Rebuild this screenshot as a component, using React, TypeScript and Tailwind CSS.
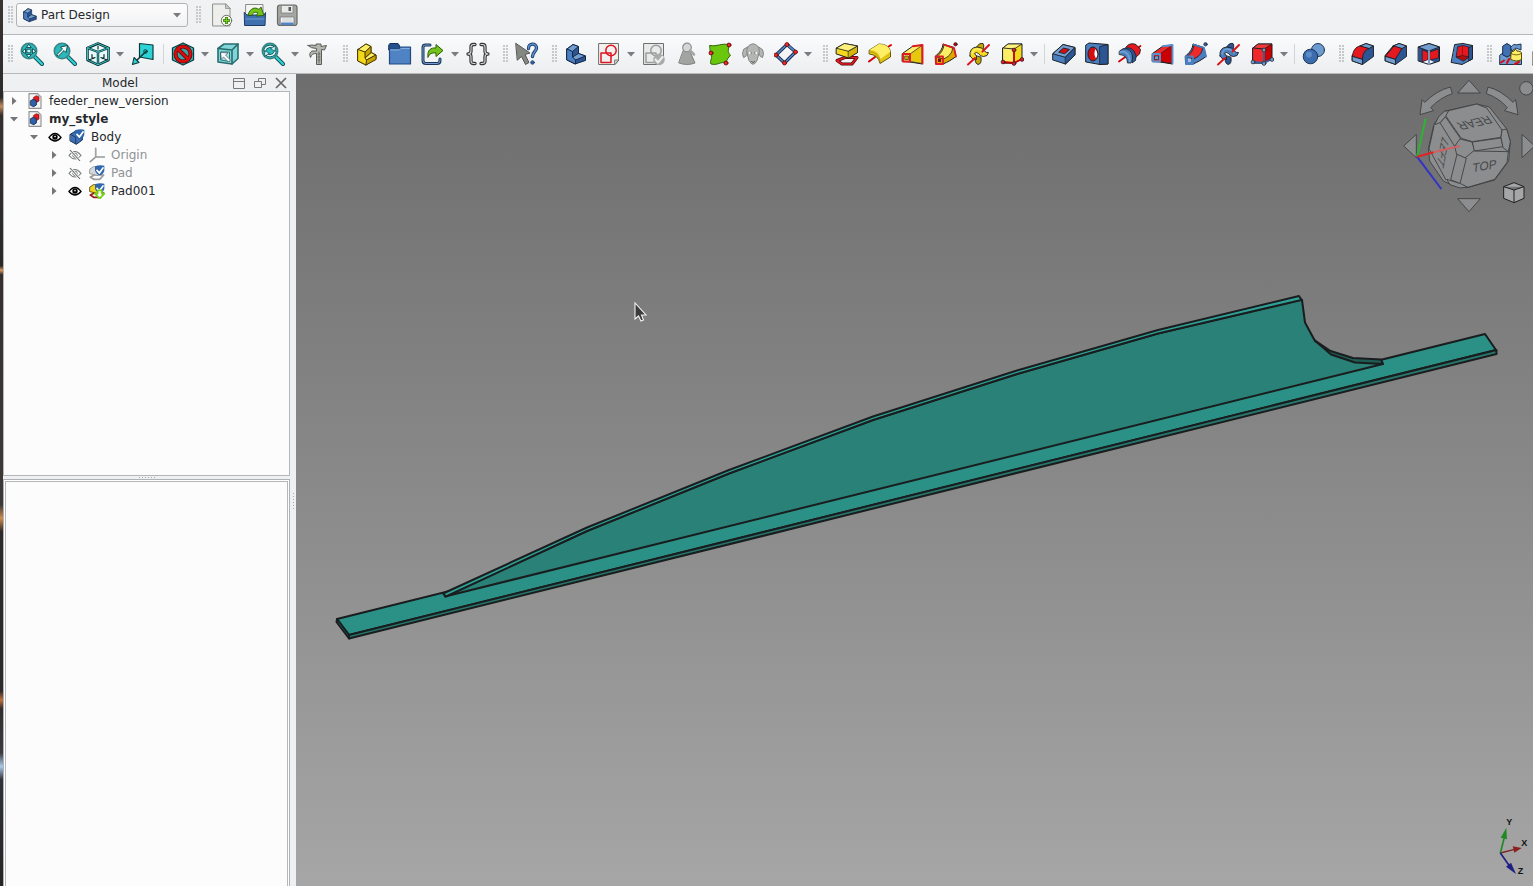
import type { ReactNode } from 'react';

const K = '#1b1e24';

function Icon({ children, size = 'h-6 w-6' }: { children: ReactNode; size?: string }) {
  return (
    <svg viewBox="0 0 24 24" className={`${size} shrink-0`} fill="none" strokeLinejoin="round" strokeLinecap="round" aria-hidden="true">
      {children}
    </svg>
  );
}

/* ---------- toolbar building blocks ---------- */

function Tool({ label, children }: { label: string; children: ReactNode }) {
  return (
    <button type="button" aria-label={label} title={label} className="flex h-8 w-[33px] shrink-0 items-center pl-1">
      <Icon>{children}</Icon>
    </button>
  );
}

function Drop({ label }: { label: string }) {
  return (
    <button type="button" aria-label={label} className="flex h-8 w-3 shrink-0 items-center justify-start pl-px">
      <Caret />
    </button>
  );
}

function Caret() {
  return (
    <svg viewBox="0 0 8 5" className="h-[5px] w-2 shrink-0" aria-hidden="true">
      <path d="M0 0h8L4 4.6z" fill="#797b7e" />
    </svg>
  );
}

function Sep() {
  return (
    <div className="flex w-[7px] shrink-0 justify-center">
      <div className="h-5 w-px bg-[#d3d4d6]" />
    </div>
  );
}

function Grip({ first = false }: { first?: boolean }) {
  return (
    <div className={`flex shrink-0 justify-end pr-[3px] ${first ? 'w-[13px]' : 'w-4'}`}>
      <div className="h-[18px] w-[5px] bg-[radial-gradient(circle_at_1px_1px,#c4c5c7_0.7px,transparent_0.8px)] bg-[length:3px_3px]" />
    </div>
  );
}

/* ---------- shared icon drawings ---------- */

type Tone = { light: string; mid: string; dark: string };
const blue: Tone = { light: '#729fcf', mid: '#4a7fc0', dark: '#2c5594' };
const yellow: Tone = { light: '#fdee66', mid: '#f4d81c', dark: '#c9a500' };

function Step({ t }: { t: Tone }) {
  return (
    <g stroke="#4a3d00" strokeWidth="1">
      <path d="M3 7.5 11 2l5 2.5v6l5 2.5v4L11 23l-8-4z" fill={t.mid} />
      <path d="M3 7.5 11 2l5 2.5-6 5.5z" fill={t.light} />
      <path d="m10 16 6-5.500 5 2.500-9.500 5z" fill={t.light} />
      <path d="M10 10l6-5.500v6L10 16z" fill={t.dark} />
      <path d="M11.500 18 21 13v4.500L11 23z" fill={t.dark} />
      <path d="M3 7.500 10 10v6l1.500 2L11 23l-8-4z" fill={t.mid} />
    </g>
  );
}

function BlueBody() {
  return (
    <g stroke="#14294a" strokeWidth="1">
      <path d="M3 7 9 2.500l5.500 2v7l7 2.500v4.500L11 22l-8-4z" fill={blue.dark} />
      <path d="M3 7 9 2.500l5.500 2L8.500 9.500z" fill={blue.light} />
      <path d="m8.500 15 6-3.500 7 2.500-10 4z" fill={blue.light} />
      <path d="M3 7l5.500 2.500V15l3 3v4L3 18z" fill={blue.mid} />
    </g>
  );
}

function Lens({ children }: { children?: ReactNode }) {
  return (
    <>
      <path d="m14.500 14.500 7.500 7.500" stroke="#0b4a4d" strokeWidth="4" />
      <path d="m15 15 7 7" stroke="#2fd0d3" strokeWidth="2.400" />
      <circle cx="9" cy="9" r="7.700" fill="#2bb8bb" stroke="#3b8486" strokeWidth="1.600" />
      {children}
    </>
  );
}

function Revolve() {
  return (
    <>
      <path d="M1 19.500 22.500 4" stroke="#d40000" strokeWidth="1.700" />
      <path d="M8 5Q12 0 18 2.500l4.500 5-1 4.500-6 5z" fill="#e3191f" stroke={K} strokeWidth=".9" />
      <path d="M5 7q6-3.500 11 2 3.500 5 1.500 9.500L14 21Q15 11 5 9.500z" fill={blue.dark} stroke={K} strokeWidth=".8" />
      <path d="M1.500 9Q5 5.500 9 7q6 2.500 5.500 9 0 3-1.500 5H9.500Q9.500 13 1.500 12.500z" fill={blue.mid} stroke={K} strokeWidth=".8" />
      <path d="M2.500 9.800q8-1.500 9.500 9.500" stroke={blue.light} strokeWidth="1.800" />
    </>
  );
}

function Loft({ cut = false }: { cut?: boolean }) {
  const edge = cut ? '#5b8fce' : '#e01b24';
  return (
    <>
      <path d="M1.500 11.500 12 4l9.500-1v19L9 20l-7.500-.5z" fill={cut ? '#ef2929' : yellow.light} stroke={K} strokeWidth="1" />
      <path d="m9 12 12-8.500v18L9 19.500z" fill={cut ? '#cc0000' : '#e6c90f'} stroke={K} strokeWidth=".7" />
      <path d="M12 4.200 21.500 3v18.500M2 12h7v7.500H2z" stroke={edge} strokeWidth="1.900" />
      <path d="M4 14h3.500v3.500H4z" fill={cut ? '#729fcf' : '#c9a500'} stroke={K} strokeWidth=".6" />
    </>
  );
}

function Pipe({ cut = false }: { cut?: boolean }) {
  const edge = cut ? '#4a7fc0' : '#e01b24';
  return (
    <>
      <path d="M1.500 14c4-3 7-7 7.500-12l11 3.500 2 9c-4 3-8 5.500-13 7.500H2z" fill={cut ? '#4a7fc0' : '#d9a900'} stroke={K} />
      <path d="M3 14.500c4-3 6.500-7 7-11.500l8.500 3c0 5-4 9-9 11z" fill={cut ? '#ef2929' : yellow.light} stroke={K} strokeWidth=".8" />
      <path d="M9.500 2.500 20 6l2 8.500M2 14.500h7V22H2z" stroke={edge} strokeWidth="1.800" />
      <path d="M4 16.500h3V20H4z" fill={cut ? '#9cc0ea' : '#7a1010'} />
      <circle cx="21.500" cy="2.300" r="1.700" fill={cut ? '#3465a4' : '#cc0000'} stroke={K} strokeWidth=".7" />
    </>
  );
}

function Helix({ t }: { t: Tone }) {
  return (
    <>
      <g stroke={K} strokeWidth=".9">
        <path d="M9 6q3-5.500 7-4.500 2 3-1 8z" fill={t.dark} />
        <path d="M8.500 14q-1.500 7 2.500 8.500 4-.5 3-7z" fill={t.dark} />
        <path d="M3 14Q2 5.500 10 5q5 0 7.500 4 1.500 2 4 1.500-.5 4-5 4-3.500 0-5-3-2-2-4 0 3 2 2 6-4 1-6.500-3.500z" fill={t.mid} />
      </g>
      <path d="M5 12q1-5 6-5 4 .5 6 4" stroke={t.light} strokeWidth="1.500" />
      <path d="m1 22.500 7-6.500m7.500-6.500L22 3" stroke="#d8141c" strokeWidth="1.900" />
    </>
  );
}

function Primitive({ cut = false }: { cut?: boolean }) {
  const line = cut ? '#35639f' : '#cc0000';
  return (
    <>
      <path d="M3 6 8 2h14v15l-8 4H3z" fill={cut ? '#cc0000' : yellow.mid} stroke={K} />
      <path d="M3 6 8 2h14l-8 5z" fill={cut ? '#ef3b3b' : '#fff27a'} stroke={K} strokeWidth=".8" />
      <path d="M3 6l11 1v14H3z" fill={cut ? '#ef2929' : yellow.light} stroke={K} strokeWidth=".8" />
      <path d="M14 8v13M3 20l11 1 8-4" stroke={line} strokeWidth="1.800" />
      {[[14, 8], [3, 20], [14, 21.500], [22, 17.500]].map(([x, y]) => (
        <circle key={`${x}-${y}`} cx={x} cy={y} r="1.900" fill={cut ? '#729fcf' : '#e01b24'} stroke={K} strokeWidth=".7" />
      ))}
    </>
  );
}

function Dress({ kind }: { kind: 'fillet' | 'chamfer' }) {
  return (
    <g stroke={K} strokeWidth=".9">
      <path d="M1.500 13 9 4l6-2.500L22.500 4v10.500l-11 8-10-3.500z" fill={blue.dark} />
      <path d="M9 4l6-2.500L22.500 4 18 6.500z" fill={blue.light} />
      <path d="m1.500 14 10 3v5.500l-10-3.500z" fill={blue.light} />
      {kind === 'fillet' ? (
        <path d="M1.500 14C2 8.500 4.500 5 9 4l9 2.500c-4 1.500-6.500 5-6.500 10.500z" fill="#e3191f" />
      ) : (
        <path d="M1.500 14 10 4l8 2.500L11.500 17z" fill="#e3191f" />
      )}
    </g>
  );
}

function SketchSheet({ color, line }: { color: string; line: string }) {
  return (
    <>
      <path d="M2 1.500h19.500v17L18 22.500H2z" fill={color} stroke="#6d6f6c" />
      <path d="M17.500 22.500V18h4z" fill="#c9cbc7" stroke="#6d6f6c" strokeWidth=".8" />
      <path d="M4 11h10v9.500H4z" stroke={line} strokeWidth="1.500" />
      <circle cx="14" cy="8.500" r="5.200" stroke={line} strokeWidth="1.500" />
    </>
  );
}

/* ---------- toolbars ---------- */

function FileBar() {
  return (
    <div className="flex h-[35px] items-start overflow-hidden border-b border-[#b7b8ba] bg-linear-to-b from-[#f1f2f4] to-[#eff0f2]">
      <div className="flex h-[30px] items-center">
        <Grip first />
        <div className="relative flex h-6 w-[172px] items-center">
          <label htmlFor="workbench" className="sr-only">Workbench</label>
          <select
            id="workbench"
            defaultValue="Part Design"
            className="h-6 w-full appearance-none rounded-[3px] border border-[#b2b3b5] bg-linear-to-b from-[#fdfdfd] to-[#f1f2f3] pr-5 pl-6 text-[12px] leading-4 text-[#26292c]"
          >
            <option>Part Design</option>
          </select>
          <span className="pointer-events-none absolute left-1.5"><Icon size="h-4 w-4"><BlueBody /></Icon></span>
          <span className="pointer-events-none absolute right-[7px]"><Caret /></span>
        </div>
        <Grip />
        <div className="flex gap-2 pl-[7px]">
          <button type="button" aria-label="New document">
            <Icon>
              <path d="M2 1h12.500L19 5.500V23H2z" fill="#eeeeec" stroke="#8d8f8b" />
              <path d="M14.500 1v4.500H19z" fill="#c5c7c3" stroke="#8d8f8b" strokeWidth=".8" />
              <circle cx="15.500" cy="17.500" r="5.200" fill="#f2f8ea" stroke="#61655c" strokeWidth=".9" />
              <path d="M15.500 14v7M12 17.500h7" stroke="#2d6b06" strokeWidth="2.600" strokeLinecap="butt" />
              <path d="M15.500 14.500v6M12.500 17.500h6" stroke="#73d216" strokeWidth="1.200" strokeLinecap="butt" />
            </Icon>
          </button>
          <button type="button" aria-label="Open document">
            <Icon>
              <path d="M3 1.500h17V14H3z" fill="#f5f5f4" stroke="#8a8c89" />
              <path d="M1.500 9.500 4 12h17l1.500-2.500-.5 13H2z" fill="#3e6fae" stroke="#1c3a66" />
              <path d="M5 12C7 5 12 3.500 16 6.500l2-2.500 3 8.500-8 .5 2-3c-3-1.500-5-.5-6 2z" fill="#73c41a" stroke="#2b5c08" strokeWidth=".9" />
              <path d="M3 16h18" stroke="#6e9dd3" />
            </Icon>
          </button>
          <button type="button" aria-label="Save">
            <Icon>
              <rect x="2.500" y="2" width="19.500" height="20.500" rx="2.500" fill="#a5a7a3" stroke="#686a67" strokeWidth="1.200" />
              <path d="M6.500 2.500h11.500V10H6.500z" fill="#e9e9e8" stroke="#7e807d" strokeWidth=".8" />
              <path d="M13.500 4h2.500v4h-2.500z" fill="#55585a" />
              <path d="M5.500 14H19v8H5.500z" fill="#f3f4f5" stroke="#777" strokeWidth=".8" />
              <path d="M6 19.500h12.500v2.500H6z" fill="#5284c4" />
              <path d="M7.500 16h9.500M7.500 18h9.500" stroke="#b9bcc0" strokeWidth=".8" />
            </Icon>
          </button>
        </div>
      </div>
    </div>
  );
}

function DesignBar() {
  return (
    <div className="flex h-[39px] items-center overflow-hidden border-b border-[#b7b8ba] bg-linear-to-b from-[#fafbfc] to-[#edeef0]">
      <Grip first />
      <Tool label="Fit all">
        <Lens>
          <path d="m9 2.500 2.300 3H6.700zM9 15.500l2.300-3H6.700zM2.500 9l3-2.300v4.600zM15.500 9l-3-2.300v4.600zM7.200 7.200h3.600v3.600H7.200z" fill="#c9f7f7" stroke="#0a3b3d" strokeWidth=".8" />
        </Lens>
      </Tool>
      <Tool label="Fit selection">
        <Lens>
          <path d="M4 12.500 9.500 7 7.500 5l7-1.500-1.500 7L11 8.500 5.500 14z" fill="#eafdfd" stroke="#0a3b3d" strokeWidth=".9" />
        </Lens>
      </Tool>
      <Tool label="Isometric view">
        <path d="M12 1.500 22.500 6v12L12 22.800 1.500 18V6z" fill="#e6fafa" stroke="#0c3033" strokeWidth="2.500" />
        <path d="M1.500 6 12 10l10.500-4M12 10v12.500" stroke="#0c3033" strokeWidth="2.400" />
        <path d="M12 1.500 22.500 6v12L12 22.800 1.500 18V6zM1.500 6 12 10l10.500-4M12 10v12.500" stroke="#41cfd2" strokeWidth=".9" />
        <path d="M12 4v3M6 12.500v3l2 1M18 12.500v3l-2 1M3 18l6-2.500M21 18l-6-2.500" stroke="#0c3033" strokeWidth="1.200" />
      </Tool>
      <Drop label="Standard views" />
      <Tool label="Align to selection">
        <path d="M8.500 1.500 22 3v14.500L8.500 15z" fill="#2ed3d6" stroke="#0d3b3d" strokeWidth="1.200" />
        <path d="M15.500 9 5.500 18.500" stroke="#0d3b3d" strokeWidth="1.700" />
        <circle cx="14.500" cy="9.500" r="1.800" stroke="#0d3b3d" />
        <path d="M1.500 22.500 3 15.500l5 5z" fill="#2ed3d6" stroke="#0d3b3d" strokeWidth="1.100" />
      </Tool>
      <Sep />
      <Tool label="Draw style">
        <path d="M12 1 22.500 6v12L12 23 1.500 18V6z" fill="#30c5c8" stroke="#0d3b3d" strokeWidth="1.300" />
        <circle cx="12" cy="12" r="7.500" stroke="#5d0505" strokeWidth="4" fill="#3da3a5" />
        <path d="m7 7 10 10" stroke="#5d0505" strokeWidth="4" />
        <circle cx="12" cy="12" r="7.500" stroke="#d90d0d" strokeWidth="2.500" />
        <path d="m7 7 10 10" stroke="#d90d0d" strokeWidth="2.500" />
      </Tool>
      <Drop label="Draw styles" />
      <Tool label="Bounding box selection">
        <path d="M2 6.500 8 2h14v14.500L16 22 2 20z" fill="#7fd6d8" stroke="#2a6c6e" strokeWidth="1.600" />
        <path d="M2 6.500 16 8l6-6M16 8v14" stroke="#2a6c6e" strokeWidth="1.600" />
        <path d="M5 10h8.500v9.500L5 18z" fill="#a9e4e5" stroke="#2c7678" />
        <path d="M5 10.500 12 11l-2.500 2 5 5-2 2-5-5L5.500 17z" fill="#fff" stroke="#456" strokeWidth=".7" />
      </Tool>
      <Drop label="Selection options" />
      <Tool label="Zoom">
        <Lens>
          <path d="M4 8c1-4 7-5 9-1.500M14 10c-1 4-7 5-9 1.500" stroke="#0d4144" strokeWidth="3" />
          <path d="M4 8c1-4 7-5 9-1.500M14 10c-1 4-7 5-9 1.500" stroke="#d6f8f8" strokeWidth="1.500" />
          <path d="m14.500 4-.5 5-4-2zM3.500 14l.5-5 4 2z" fill="#d6f8f8" stroke="#0d4144" strokeWidth=".6" />
        </Lens>
      </Tool>
      <Drop label="Zoom options" />
      <Tool label="Measure">
        <path d="M2 3.500Q6 2.500 10 3.500V2h5v2.500l5.500-1L18.500 8 15.500 7.500v15h-5v-11Q6 11 4.500 15.500 2.500 11 6 9h4.500V6.500Q5 6.500 2 3.500z" fill="#b4b5b0" stroke="#5b5d59" strokeWidth="1" />
        <path d="M13 10v11M12 12h2M12 15h2M12 18h2" stroke="#5b5d59" strokeWidth=".8" />
      </Tool>
      <Grip />
      <Tool label="Create part"><Step t={yellow} /></Tool>
      <Tool label="Create group">
        <path d="M1 2.500 2 1.500h8l1.500 2V8H1z" fill="#24508e" stroke="#17335c" />
        <path d="M1.500 6.500H11L12.500 5h10V22h-21z" fill="#5083c3" stroke="#234a80" strokeWidth="1.200" />
        <path d="M2.500 8h9l1.500-1.500h8.500" stroke="#83abdb" />
      </Tool>
      <Tool label="Make link">
        <path d="M9 3H4.500Q2 3 2 5.500v13Q2 21.500 5 21.500h11q3 0 3-3V17" stroke="#1a355c" strokeWidth="3" />
        <path d="M9 3H4.500Q2 3 2 5.500v13Q2 21.500 5 21.500h11q3 0 3-3V17" stroke="#729fcf" strokeWidth="1" />
        <path d="M7 15C6 8 10 5.500 15 6V2.500l7 6-7 6V11c-4-.5-6.500.5-8 4z" fill="#73c41a" stroke="#2b5c08" strokeWidth="1" />
      </Tool>
      <Drop label="Link actions" />
      <Tool label="Variable set">
        <path d="M9 2.500H7.500Q5 2.500 5 5v4q0 3-3 3 3 0 3 3v4q0 2.500 2.500 2.500H9M15 2.500h1.500Q19 2.500 19 5v4q0 3 3 3-3 0-3 3v4q0 2.500-2.500 2.500H15" stroke="#35383a" strokeWidth="3.300" />
        <path d="M9 2.500H7.500Q5 2.500 5 5v4q0 3-3 3 3 0 3 3v4q0 2.500 2.500 2.500H9M15 2.500h1.500Q19 2.500 19 5v4q0 3 3 3-3 0-3 3v4q0 2.500-2.500 2.500H15" stroke="#d5d7d5" strokeWidth="1.100" />
      </Tool>
      <Grip />
      <Tool label="What's this?">
        <path d="M1 1.500 15 11l-5 1.500 4 8-3.500 2-4-8L2.500 18z" fill="#858782" stroke="#555753" />
        <path d="M13.500 6.500C13 1 21.500.5 21.500 6c0 3.500-4 4-4 8.500" stroke="#1f3f70" strokeWidth="3.400" />
        <path d="M13.500 6.500C13 1 21.500.5 21.500 6c0 3.500-4 4-4 8.500" stroke="#5e91cf" strokeWidth="1.500" />
        <circle cx="17.500" cy="20.500" r="1.800" fill="#3465a4" stroke="#1f3f70" strokeWidth=".8" />
      </Tool>
      <Grip />
      <Tool label="Create body"><BlueBody /></Tool>
      <Tool label="Create sketch"><SketchSheet color="#f1f1f0" line="#e0141c" /></Tool>
      <Drop label="Sketch options" />
      <Tool label="Validate sketch">
        <SketchSheet color="#e9eaea" line="#9b9d9c" />
        <circle cx="17" cy="17.500" r="5.800" fill="#a9abaa" />
        <path d="m13.500 17.500 2.500 3 4.500-5.500" stroke="#eceded" strokeWidth="2.200" />
      </Tool>
      <Tool label="Check geometry">
        <path d="M8.500 8.500h6L20 21q-8 3-16 0z" fill="#a2a4a2" stroke="#7f8180" />
        <circle cx="12" cy="5.500" r="4.300" fill="#d5d7d6" stroke="#8d8f8e" strokeWidth="1.200" />
        <path d="m15 8.500 4 4" stroke="#a3a5a4" strokeWidth="2.500" />
      </Tool>
      <Tool label="Shape binder">
        <path d="M2 3.500C9 5 14 .5 21.500 3c-2 6-1.500 8 1 10-2 3-4 4-4.500 8.500-5-3-8 2.500-15 .500C1 19 6 15 2.500 10.500z" fill="#6ac70e" stroke="#2d6305" />
        {[[21, 3], [3, 11], [18, 21]].map(([x, y]) => (
          <circle key={x} cx={x} cy={y} r="2" fill="#ef2929" stroke="#5c0505" strokeWidth=".8" />
        ))}
      </Tool>
      <Tool label="Clone">
        <path d="M6.500 5Q12-1.500 17.500 5l4 2.500q2 4.500 0 8-2.500 0-3.500-4l-2 7Q12 26 8 18.500l-2-7q-1 4-3.500 4-2-3.500 0-8z" fill="#b4b6b4" stroke="#858785" />
        <path d="M6.500 5Q5 9 6 11.500M17.500 5q1.500 4 .5 6.500" stroke="#858785" />
        <path d="M8 10h3v2H8zM13 10h3v2h-3z" fill="#fafafa" />
        <path d="M10.200 10.300v1.400M13.800 10.300v1.400M10.500 19.500l1.500 1 1.500-1" stroke="#4b4d4b" strokeWidth=".9" />
      </Tool>
      <Tool label="Datum plane">
        <path d="M13 2.500 21.500 10 10.500 21 2 13z" stroke="#16294a" strokeWidth="3.200" />
        <path d="M13 2.500 21.500 10 10.500 21 2 13z" stroke="#5585c2" strokeWidth="1.700" />
        {[[13, 2.500], [21.500, 10], [10.500, 21], [2, 13]].map(([x, y]) => (
          <circle key={x} cx={x} cy={y} r="2" fill="#ef2929" stroke="#5c0505" strokeWidth=".7" />
        ))}
      </Tool>
      <Drop label="Datum options" />
      <Grip />
      <Tool label="Pad">
        <path d="m2 18.500 8-3h12l-5 6.500H7z" stroke="#4d0606" strokeWidth="3" />
        <path d="m2 18.500 8-3h12l-5 6.500H7z" stroke="#e01b24" strokeWidth="1.700" />
        <path d="m1.500 6 8-4.500L22.500 4v6.500l-9 5.500-12-4z" fill={yellow.mid} stroke={K} />
        <path d="M13.500 9 22.500 4v6.500l-9 5.500z" fill="#d6b60a" stroke={K} strokeWidth=".7" />
        <path d="m1.500 6 8-4.500L22.500 4l-9 5z" fill="#fff07c" stroke={K} strokeWidth=".8" />
      </Tool>
      <Tool label="Revolution">
        <path d="m1 19.500 6-4.500M17 7l6-4" stroke="#d40000" strokeWidth="2" />
        <path d="M1.500 8 11 2q10 0 11.500 7.500V15L12 21.500Q10.500 13 1.500 12z" fill="#e2c512" stroke="#5a4a00" strokeWidth=".9" />
        <path d="M1.500 8 11 2q10 0 11.500 7.500L12.500 17Q11 8.500 1.500 8z" fill={yellow.light} />
        <path d="M1.500 9.500q9 .5 11 11" stroke="#b39300" strokeWidth=".8" />
      </Tool>
      <Tool label="Additive loft"><Loft /></Tool>
      <Tool label="Additive pipe"><Pipe /></Tool>
      <Tool label="Additive helix"><Helix t={yellow} /></Tool>
      <Tool label="Additive primitive"><Primitive /></Tool>
      <Drop label="Additive primitives" />
      <Sep />
      <Tool label="Pocket">
        <path d="M1 11.500 11 2.500l12 3V13l-9.500 9L1 18z" fill={blue.mid} stroke={K} />
        <path d="M1 11.500 11 2.500l12 3-9.500 9.500z" fill={blue.light} stroke={K} strokeWidth=".9" />
        <path d="M13.500 15 23 5.500V13l-9.500 9z" fill={blue.dark} stroke={K} strokeWidth=".8" />
        <path d="m7 10 4.500-4 6 1.500-4.500 4z" fill="#d40d12" stroke={K} strokeWidth=".9" />
      </Tool>
      <Tool label="Hole">
        <path d="m1 3 3-2 19 1.500V22l-8 .5L1 20z" fill={blue.mid} stroke={K} />
        <path d="M15 4.500 23 2.500V22l-8 .5z" fill={blue.dark} stroke={K} strokeWidth=".8" />
        <ellipse cx="8" cy="12" rx="5" ry="7" fill="#d40d12" stroke={K} />
        <path d="M10.500 7q-2.500 5 .5 9.500Q14 12 10.500 7z" fill="#fff" />
      </Tool>
      <Tool label="Groove"><Revolve /></Tool>
      <Tool label="Subtractive loft"><Loft cut /></Tool>
      <Tool label="Subtractive pipe"><Pipe cut /></Tool>
      <Tool label="Subtractive helix"><Helix t={blue} /></Tool>
      <Tool label="Subtractive primitive"><Primitive cut /></Tool>
      <Drop label="Subtractive primitives" />
      <Sep />
      <Tool label="Boolean">
        <circle cx="16" cy="8" r="6.500" fill="#6d9bd0" stroke="#1d3557" />
        <circle cx="8.500" cy="14.500" r="7.300" fill="#3b6cae" stroke="#1d3557" />
        <circle cx="7" cy="12.500" r="3" fill="#5b8cc8" />
      </Tool>
      <Grip />
      <Tool label="Fillet"><Dress kind="fillet" /></Tool>
      <Tool label="Chamfer"><Dress kind="chamfer" /></Tool>
      <Tool label="Draft">
        <path d="M1.500 5 12 1.500 22.500 5v14L12 22.500 1.500 19z" fill={blue.dark} stroke={K} />
        <path d="M1.500 5 12 1.500 22.500 5 12 9z" fill={blue.light} stroke={K} strokeWidth=".9" />
        <path d="M5.500 8 11 10v8l-5.500 1.500zM13 10l8.500-3v9L13 18z" fill="#e3191f" stroke={K} strokeWidth=".7" />
        <path d="M12 9v13.500" stroke="#a9c6e8" strokeWidth="1.300" />
        <path d="m6 20 5-2v3.500zM13 18l4 2-4 1.500z" fill="#f4f4f4" />
      </Tool>
      <Tool label="Thickness">
        <path d="M5 2.500 13 1.500l9.500 2V17L12 22.500l-10.500-2z" fill={blue.mid} stroke={K} />
        <path d="M8 4.500 13 3.500l6 1.500v10l-5 3-7.500-3z" fill="#e3191f" stroke={K} strokeWidth=".8" />
        <path d="m6.500 15 6-1.500 6.500 1.500-5.500 4z" fill="#b50c10" stroke={K} strokeWidth=".7" />
        <path d="M12.500 4v9.500" stroke="#a30a0e" strokeWidth=".8" />
        <path d="M19 5.500 22.500 3.500V17L19 18.500z" fill={blue.dark} stroke={K} strokeWidth=".8" />
      </Tool>
      <Grip />
      <Tool label="Feature patterns">
        <path d="M1 13c4-4 6 0 9-1s7-4 12.500-1v11.500H1z" fill="#6d9bd0" stroke="#1d3557" />
        <path d="m4 4 4-2.500L12 4v9l-4 2-4-2z" fill="#3f70b1" stroke="#142a4a" />
        <path d="M12 5q3-4 5-2l5-1v6l-5-2-4 3z" fill="#6d9bd0" stroke="#1d3557" />
        <path d="M12 11.500q0-2.500 3-2.500l1.500-2L18 9q4.500 0 4.500 2.500v6q-5 3-10.500 0z" fill={yellow.light} stroke="#594800" />
        <path d="M12 11.500q5 3 10.500 0" stroke="#594800" strokeWidth=".8" />
        <path d="m2 20.500 3-2M10 17l-2 4M16 22l4-2" stroke="#d40d12" strokeWidth="2" />
      </Tool>
      <Tool label="More tools"><path d="M.5 10h20v13H.5z" fill="#888a85" stroke="#777" /></Tool>
    </div>
  );
}

/* ---------- model tree ---------- */

function Expander({ open }: { open: boolean }) {
  return (
    <button type="button" aria-label={open ? 'Collapse' : 'Expand'} className="flex h-[18px] w-5 shrink-0 items-center justify-center">
      <svg viewBox="0 0 8 8" className="h-2 w-2" aria-hidden="true">
        <path d={open ? 'M0 2h8L4 6.500z' : 'M2 0v8l4.500-4z'} fill="#74767a" />
      </svg>
    </button>
  );
}

function Eye({ visible }: { visible: boolean }) {
  return (
    <button type="button" aria-label={visible ? 'Hide' : 'Show'} className="ml-[3px] flex h-4 w-4 shrink-0 items-center justify-center">
      <svg viewBox="0 0 16 16" className="h-4 w-4" fill="none" aria-hidden="true">
        {visible ? (
          <>
            <path d="M2 8.500q6-8 12 0-6 7-12 0z" fill="#fff" stroke="#000" strokeWidth="1.300" />
            <circle cx="8" cy="8" r="2.700" fill="#000" />
            <circle cx="8" cy="7.600" r=".8" fill="#fff" />
          </>
        ) : (
          <>
            <path d="M2 8.500q6-8 12 0-6 7-12 0z" stroke="#77797b" strokeWidth="1.100" />
            <circle cx="8" cy="8.300" r="2.200" stroke="#77797b" />
            <path d="m3 3 10 11" stroke="#fcfcfc" strokeWidth="2.500" />
            <path d="m3 3 10 11" stroke="#66686a" strokeWidth="1.100" />
          </>
        )}
      </svg>
    </button>
  );
}

function DocIcon() {
  return (
    <Icon size="h-4 w-4">
      <path d="M3 1h13l5 5v17H3z" fill="#f4f5f5" stroke="#8e9092" strokeWidth="1.700" />
      <path d="M16 1v5h5z" fill="#b9bbbc" />
      <path d="m10 6.500 4-2.500 4 2v6l-4 2.500-4-2z" fill="#e0191f" stroke="#8c0b0e" />
      <path d="m5.500 11.500 4-2 4.500 2v6.500l-4 2.500-4.500-2z" fill="#2f62ab" stroke="#162f57" strokeWidth="1.400" />
    </Icon>
  );
}

function CheckBadge() {
  return (
    <>
      <path d="M9 2q7-3 14-1v7.500Q21 15 15.500 15.500 10 13 9 8z" fill="#2f66ad" />
      <path d="m12 8 3.500 4L21 4.500" stroke="#fff" strokeWidth="2.600" />
    </>
  );
}

type NodeKind = 'doc' | 'body' | 'origin' | 'pad' | 'tip';

function NodeIcon({ kind }: { kind: NodeKind }) {
  if (kind === 'doc') return <DocIcon />;
  if (kind === 'origin')
    return (
      <Icon size="h-4 w-4">
        <path d="M10 2v13h13M10 15l-8 7" stroke="#949698" strokeWidth="2.400" />
        <path d="M10 2v12" stroke="#aeb0b1" strokeWidth="1" />
      </Icon>
    );
  if (kind === 'body')
    return (
      <Icon size="h-4 w-4">
        <path d="M2 8 10 3l10 6v7.500l-9 6.500-9-5z" fill="#3e70b3" stroke="#16325b" strokeWidth="1.500" />
        <path d="M2 8l8 4v10" stroke="#16325b" strokeWidth="1.200" />
        <CheckBadge />
      </Icon>
    );
  const tip = kind === 'tip';
  return (
    <Icon size="h-4 w-4">
      <path d="m2 18 6-3h14l-6 6.500H7z" fill="none" stroke={tip ? '#9d1a1a' : '#9a9c9e'} strokeWidth="2.600" />
      <path d="m1.500 6 5-3.500H14V16l-12.500-3z" fill={tip ? '#efd420' : '#d5d7d8'} stroke={tip ? '#574800' : '#8f9193'} strokeWidth="1.300" />
      <CheckBadge />
      {tip && <path d="M13 11h6v5h4l-7 7.500L9 16h4z" fill="#fff" stroke="#73d216" strokeWidth="2.600" />}
    </Icon>
  );
}

type Row = { name: string; kind: NodeKind; open?: boolean; visible?: boolean; indent: string; tone: string };

const rows: Row[] = [
  { name: 'feeder_new_version', kind: 'doc', indent: '', tone: 'text-[#26292c]' },
  { name: 'my_style', kind: 'doc', open: true, indent: '', tone: 'font-bold text-[#26292c]' },
  { name: 'Body', kind: 'body', open: true, visible: true, indent: 'pl-5', tone: 'text-[#26292c]' },
  { name: 'Origin', kind: 'origin', visible: false, indent: 'pl-10', tone: 'text-[#909294]' },
  { name: 'Pad', kind: 'pad', visible: false, indent: 'pl-10', tone: 'text-[#909294]' },
  { name: 'Pad001', kind: 'tip', visible: true, indent: 'pl-10', tone: 'text-[#26292c]' },
];

function ModelDock() {
  return (
    <aside className="flex w-[287px] shrink-0 flex-col">
      <header className="flex h-[17px] shrink-0 items-center pr-[3px]">
        <h2 className="flex-1 pl-1 text-center text-[12px] leading-4 text-[#26292c]">Model</h2>
        <div className="flex gap-[9px]">
          <button type="button" aria-label="Minimize">
            <svg viewBox="0 0 12 12" className="h-3 w-3" fill="none" stroke="#77797b"><path d="M.5 1.500h11v10H.5zM.5 4.500h11" /></svg>
          </button>
          <button type="button" aria-label="Float">
            <svg viewBox="0 0 12 12" className="h-3 w-3" fill="none" stroke="#77797b"><path d="M4.500 4V1.500h7v6H8M.5 4.500h7v6h-7z" /></svg>
          </button>
          <button type="button" aria-label="Close">
            <svg viewBox="0 0 12 12" className="h-3 w-3" fill="none" stroke="#66686a" strokeWidth="1.700"><path d="m1 1 10 10M11 1 1 11" /></svg>
          </button>
        </div>
      </header>
      <ul className="h-[385px] shrink-0 border border-[#b5b6b9] bg-[#fcfcfc]">
        {rows.map((r) => (
          <li key={r.name} className={`flex h-[18px] items-center ${r.indent}`}>
            <Expander open={!!r.open} />
            {r.visible !== undefined && <Eye visible={r.visible} />}
            <span className={r.visible === undefined ? 'ml-[3px]' : 'ml-1.5'}>
              <NodeIcon kind={r.kind} />
            </span>
            <span className={`pl-1.5 text-[12px] leading-[18px] ${r.tone}`}>{r.name}</span>
          </li>
        ))}
      </ul>
      <div className="flex h-[3px] shrink-0 items-center justify-center gap-0.5">
        {[0, 1, 2, 3, 4, 5].map((i) => <span key={i} className="h-px w-px bg-[#a9aaad]" />)}
      </div>
      <section aria-label="Properties" className="flex flex-1 border border-b-0 border-[#b0b1b4] bg-white px-px pt-px">
        <div className="flex-1 border border-b-0 border-[#b5b6b9] bg-[#fcfcfc]" />
      </section>
    </aside>
  );
}

/* ---------- 3D view ---------- */

function Model3D() {
  return (
    <svg viewBox="296 74 1237 812" preserveAspectRatio="xMidYMid slice" className="block h-full w-full" fill="none" stroke="#191d1d" strokeWidth="2" strokeLinejoin="round" role="img" aria-label="Pad001 solid">
      <path d="M337 619 1485 334l11 16L349 635z" fill="#2b9187" />
      <path d="M349 635 1496.500 350v4L349 638.500z" fill="#27776f" />
      <path d="m337 619 12 16v3.500L336.500 622z" fill="#2b8d84" />
      <path d="M445 596.500 587 531l142-57.500L873 420l144-46 141-40.500 143-34 1 .5 3 22.500 10 18.500 16 12 24 8 28 3z" fill="#2a8177" />
      <path d="m443 593.500 144-66 142-57.500 144-53.500 144-46L1158 330l141-34 2.500 4-143.500 33.500-141 40.500-144 46-144 53.500L587 531l-141 65.500z" fill="#2ea198" />
      <path d="m1315 340.500 15.500 10.500 22.500 7 28 1.500 2 4.500-28-1.500-24-8z" fill="#1f5c56" />
    </svg>
  );
}

function NavigationCube() {
  return (
    <svg viewBox="0 12 429 438" className="absolute top-0 right-0 h-[146px] w-[143px]" fill="#8b8d8f" stroke="#404143" strokeWidth="2.700" strokeLinejoin="round" role="img" aria-label="Navigation cube">
      <path d="m237 31 34 38h-68zM237 425l-34-39h68zM41 228l38-35v70zM434 228l-38-35v70z" />
      <path d="M181 51q-40 10-77 46l-8-8-6 45 41-12-9-9q28-30 65-42zM294 51q40 10 75 46l8-8 7 45-41-12 9-9q-26-30-63-42z" />
      <circle cx="409" cy="55" r="20" />
      <path d="M163 124 260 102l38 9 52 66 11 38-5 58-42 57-83 23-46-8-25-12-41-60-4-38 17-73z" />
      <path d="m176 122 84-20 30 12 46 66-3 22-86 13-33-10-50-72z" />
      <path d="m206 206 40 10 8 24-30 25-24-12-6-24z" />
      <path d="m247 216 86-12 6 26-86 13z" />
      <path d="m150 158 16-18 45 65-17 24z" />
      <path d="m201 253 28 12-19 76-28-12z" />
      <path d="m163 124 13-2-10 18-16 18-16 6 12-24zM336 180l14-3 11 38-6 30-16-12-6-31zM170 328l42 13 20 10-22 3-30-10z" />
      <path d="M254 243l101 2-4 32-37 51-83 25M132 168l-15 68 51 94" fill="none" />
      <g stroke="none" fill="#47494b" fontFamily="Liberation Sans, Arial, sans-serif" fontSize="36" textAnchor="middle">
        <text transform="translate(284 287) rotate(-10) skewX(-14)" y="13">TOP</text>
        <text transform="translate(254 159) rotate(167) skewX(25)" y="13">REAR</text>
        <text transform="translate(158 247) rotate(101) skewX(-41)" y="11" fontSize="32">LEFT</text>
      </g>
      <g fill="none" strokeWidth="6">
        <path d="m81 260 26-114" stroke="#2cb52f" />
        <path d="m81 260 73 97" stroke="#3232c8" />
        <path d="m81 260 50-13" stroke="#e02424" />
        <path d="m131 247 78-19" stroke="#cf6163" />
      </g>
      <path d="m341 350 31-12 30 12v35l-30 13-31-13zM341 350l31 10 30-10M372 360v38" fill="#a4a6a8" stroke="#202122" strokeWidth="3" />
    </svg>
  );
}

function AxisCross() {
  return (
    <svg viewBox="0 0 159 228" className="absolute right-0 bottom-0 h-[76px] w-[53px]" fill="none" role="img" aria-label="Axis cross">
      <path d="m61 129 43-11" stroke="#7e2323" strokeWidth="4" />
      <path d="m125 114-27-5 5 19z" fill="#8a2020" />
      <path d="m61 129 12-47" stroke="#1f8a25" strokeWidth="5" />
      <path d="m79 53-17 30 19 5z" fill="#1f8a25" />
      <path d="m61 129 27 38" stroke="#1e1e85" strokeWidth="5" />
      <path d="m108 192-30-22 15-12z" fill="#1e1e85" />
      <g fill="#111" fontFamily="Liberation Sans, Arial, sans-serif" fontWeight="bold" fontSize="27">
        <text x="79" y="46">Y</text>
        <text x="124" y="109">X</text>
        <text x="113" y="191">Z</text>
      </g>
    </svg>
  );
}

function Viewport() {
  return (
    <main className="relative min-w-0 flex-1 overflow-hidden bg-linear-to-b from-[#6d6d6d] to-[#a6a6a6]">
      <div className="absolute inset-0"><Model3D /></div>
      <NavigationCube />
      <AxisCross />
      <svg viewBox="0 0 13 20" className="absolute top-[228px] left-[338px] h-5 w-[13px]" aria-hidden="true">
        <path d="M1 1v16l3.500-3 2.500 5 2.500-1-2-5H12z" fill="#3b3b3b" stroke="#f2f2f2" strokeWidth="1.100" />
      </svg>
    </main>
  );
}

export default function App() {
  return (
    <div className="flex h-screen overflow-hidden bg-[#eff0f1] font-['DejaVu_Sans',sans-serif]">
      <div className="w-[3px] shrink-0 bg-[linear-gradient(to_bottom,#3a3533_0,#2c2a2a_11%,#c08a5c_12%,#35302e_13%,#2b2929_30%,#d9975a_30.500%,#35302e_31%,#3c3937_57%,#d08c4c_58.500%,#2b2929_60%,#2b2929_78%,#c06f3c_79%,#302d2c_80%,#3a3b40_85%,#a9cbe8_86.500%,#303238_88%,#262525)]" />
      <div className="flex min-w-0 flex-1 flex-col">
        <FileBar />
        <DesignBar />
        <div className="flex min-h-0 flex-1">
          <ModelDock />
          <div className="flex w-1.5 shrink-0 flex-col items-center gap-0.5 pt-[419px]">
            {[0, 1, 2, 3, 4, 5].map((i) => <span key={i} className="h-px w-px bg-[#a9aaad]" />)}
          </div>
          <Viewport />
        </div>
      </div>
    </div>
  );
}
